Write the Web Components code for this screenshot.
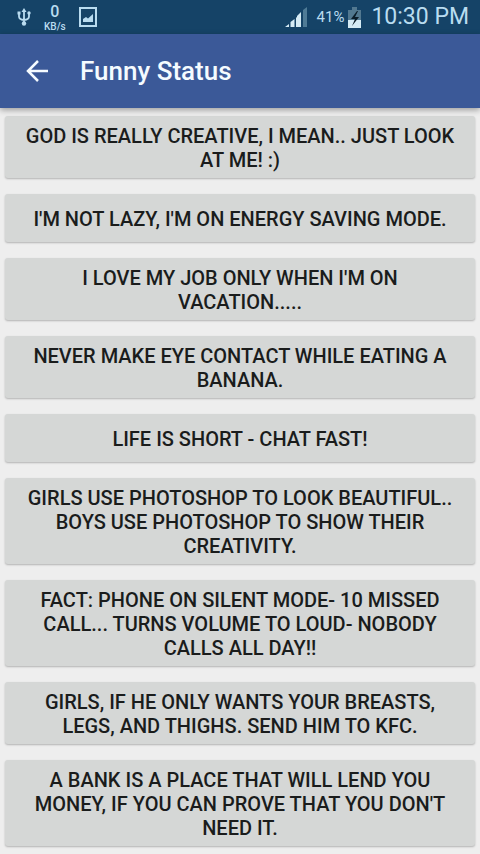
<!DOCTYPE html>
<html lang="en">
<head>
<meta charset="utf-8">
<meta name="viewport" content="width=device-width, initial-scale=1">
<title>Funny Status</title>
<style>
body {
    margin: 0;
    background: #eeeeee;
    font-family: Roboto, 'Noto Sans', sans-serif;
}
</style>
</head>
<body>
<status-bar speed="0" battery="41%" time="10:30 PM"></status-bar>
<app-bar>Funny Status</app-bar>
<message-list>
    <message-button>God is really creative, I mean.. Just look at me! :)</message-button>
    <message-button>I'm not lazy, I'm on energy saving mode.</message-button>
    <message-button>I love my job only when I'm on vacation.....</message-button>
    <message-button>Never make eye contact while eating a banana.</message-button>
    <message-button>Life is short - Chat fast!</message-button>
    <message-button>Girls use photoshop to look beautiful.. Boys use photoshop to show their creativity.</message-button>
    <message-button>Fact: Phone on silent mode- 10 missed call... Turns volume to loud- nobody calls all day!!</message-button>
    <message-button>Girls, if he only wants your breasts, legs, and thighs. Send him to KFC.</message-button>
    <message-button>A bank is a place that will lend you money, if you can prove that you don't need it.</message-button>
</message-list>

<script>
const statusBarTemplate = document.createElement('template');
statusBarTemplate.innerHTML = `
<style>
:host {
    display: flex;
    align-items: center;
    justify-content: space-between;
    height: 34px;
    padding: 0 11px 0 17px;
    background: #154367;
    color: #b9dcf0;
}

.side {
    display: flex;
    align-items: center;
}

.left {
    gap: 13px;
}

.right {
    gap: 4px;
}

svg {
    display: block;
}

.speed {
    display: flex;
    flex-direction: column;
    align-items: center;
    font-size: 10px;
    font-weight: 500;
    line-height: 11px;
}

.speed .rate {
    font-size: 16px;
    line-height: 18px;
}

.signal {
    margin-right: 6px;
}

.battery {
    font-size: 15px;
}

.time {
    margin-left: 6px;
    font-size: 23px;
    line-height: 34px;
}
</style>
<div class="side left">
    <svg width="14" height="18" viewBox="0 0 14 18" fill="none" stroke="currentColor" stroke-width="1.800">
        <path d="M7 3v12M2 5v3.500q0 3 5 3.500M12 5v3.500q0 3-5 3.500"/>
        <path d="M7 0l2.500 4h-5zM.5 3.500h3v3h-3z" fill="currentColor" stroke="none"/>
        <circle cx="12" cy="5" r="1.700" fill="currentColor" stroke="none"/>
        <circle cx="7" cy="15.500" r="2.200" fill="currentColor" stroke="none"/>
    </svg>
    <div class="speed">
        <span class="rate"></span>
        <span>KB/s</span>
    </div>
    <svg width="18" height="20" viewBox="0 0 18 20">
        <rect x="1" y="1" width="16" height="18" fill="none" stroke="currentColor" stroke-width="2"/>
        <path d="M4 15v-3l3-2 2 1.500 5-4.500v8z" fill="currentColor"/>
    </svg>
</div>
<div class="side right">
    <svg class="signal" width="22" height="20" viewBox="0 0 22 20" fill="#d5ebf5">
        <path d="M0 20l4-3v3zM5.500 15l4-3v8h-4zM11 11l4-3v12h-4z"/>
        <path d="M11 11l4-3v12h-4z"/>
        <path d="M12 9l4-4v15h-4z"/>
        <path d="M18 3l4-3v20h-4z" fill="#4f7b96"/>
        <path d="M10.500 11v9" stroke="#154367"/>
    </svg>
    <span class="battery"></span>
    <svg width="13" height="21" viewBox="0 0 13 21">
        <path d="M4 0h5v3h4v18h-13v-18h4z" fill="#527890"/>
        <path d="M0 13h13v8h-13z" fill="#d5ebf5"/>
        <path d="M9 4l-6 8h4l-3 7 7-9h-4l3-6z" fill="#0b1c29"/>
    </svg>
    <span class="time"></span>
</div>
`;

class StatusBar extends HTMLElement {
    constructor() {
        super();
        this.attachShadow({mode: 'open'});
        this.shadowRoot.appendChild(statusBarTemplate.content.cloneNode(true));
        this.shadowRoot.querySelector('.rate').textContent = this.getAttribute('speed');
        this.shadowRoot.querySelector('.battery').textContent = this.getAttribute('battery');
        this.shadowRoot.querySelector('.time').textContent = this.getAttribute('time');
    }
}

const appBarTemplate = document.createElement('template');
appBarTemplate.innerHTML = `
<style>
:host {
    display: flex;
    align-items: center;
    gap: 24px;
    position: relative;
    height: 74px;
    padding: 0 18px;
    background: #3b5998;
    color: #f5fbff;
    box-shadow: 0 2px 6px rgba(0, 0, 0, 0.35);
}

button {
    display: flex;
    align-items: center;
    justify-content: center;
    width: 38px;
    height: 48px;
    padding: 0;
    border: none;
    background: none;
    color: inherit;
    cursor: pointer;
}

h1 {
    margin: 0;
    font-size: 26px;
    font-weight: 500;
    line-height: 32px;
}
</style>
<button type="button" aria-label="Back">
    <svg width="22" height="22" viewBox="0 0 22 22" fill="none" stroke="currentColor" stroke-width="2.500">
        <path d="M12 1L2 11l10 10M2 11h20"/>
    </svg>
</button>
<h1><slot></slot></h1>
`;

class AppBar extends HTMLElement {
    constructor() {
        super();
        this.attachShadow({mode: 'open'});
        this.shadowRoot.appendChild(appBarTemplate.content.cloneNode(true));
    }

    connectedCallback() {
        this.shadowRoot.querySelector('button').addEventListener('click', () => history.back());
    }
}

const messageListTemplate = document.createElement('template');
messageListTemplate.innerHTML = `
<style>
:host {
    display: flex;
    flex-direction: column;
    gap: 16px;
    padding: 8px 5px 4px;
}
</style>
<slot></slot>
`;

class MessageList extends HTMLElement {
    constructor() {
        super();
        this.attachShadow({mode: 'open'});
        this.shadowRoot.appendChild(messageListTemplate.content.cloneNode(true));
    }
}

const messageButtonTemplate = document.createElement('template');
messageButtonTemplate.innerHTML = `
<style>
:host {
    display: block;
}

button {
    display: block;
    width: 100%;
    min-height: 48px;
    padding: 8px 16px 6px;
    border: none;
    border-radius: 3px;
    background: #d5d7d6;
    box-shadow: 0 1px 2px rgba(0, 0, 0, 0.25);
    color: #1a1c1c;
    font-family: inherit;
    font-size: 20px;
    font-weight: 500;
    line-height: 24px;
    text-align: center;
    text-transform: uppercase;
    cursor: pointer;
}

button:active {
    background: #c4c6c5;
}
</style>
<button type="button"><slot></slot></button>
`;

class MessageButton extends HTMLElement {
    constructor() {
        super();
        this.attachShadow({mode: 'open'});
        this.shadowRoot.appendChild(messageButtonTemplate.content.cloneNode(true));
    }
}

window.customElements.define('status-bar', StatusBar);
window.customElements.define('app-bar', AppBar);
window.customElements.define('message-list', MessageList);
window.customElements.define('message-button', MessageButton);
</script>
</body>
</html>
